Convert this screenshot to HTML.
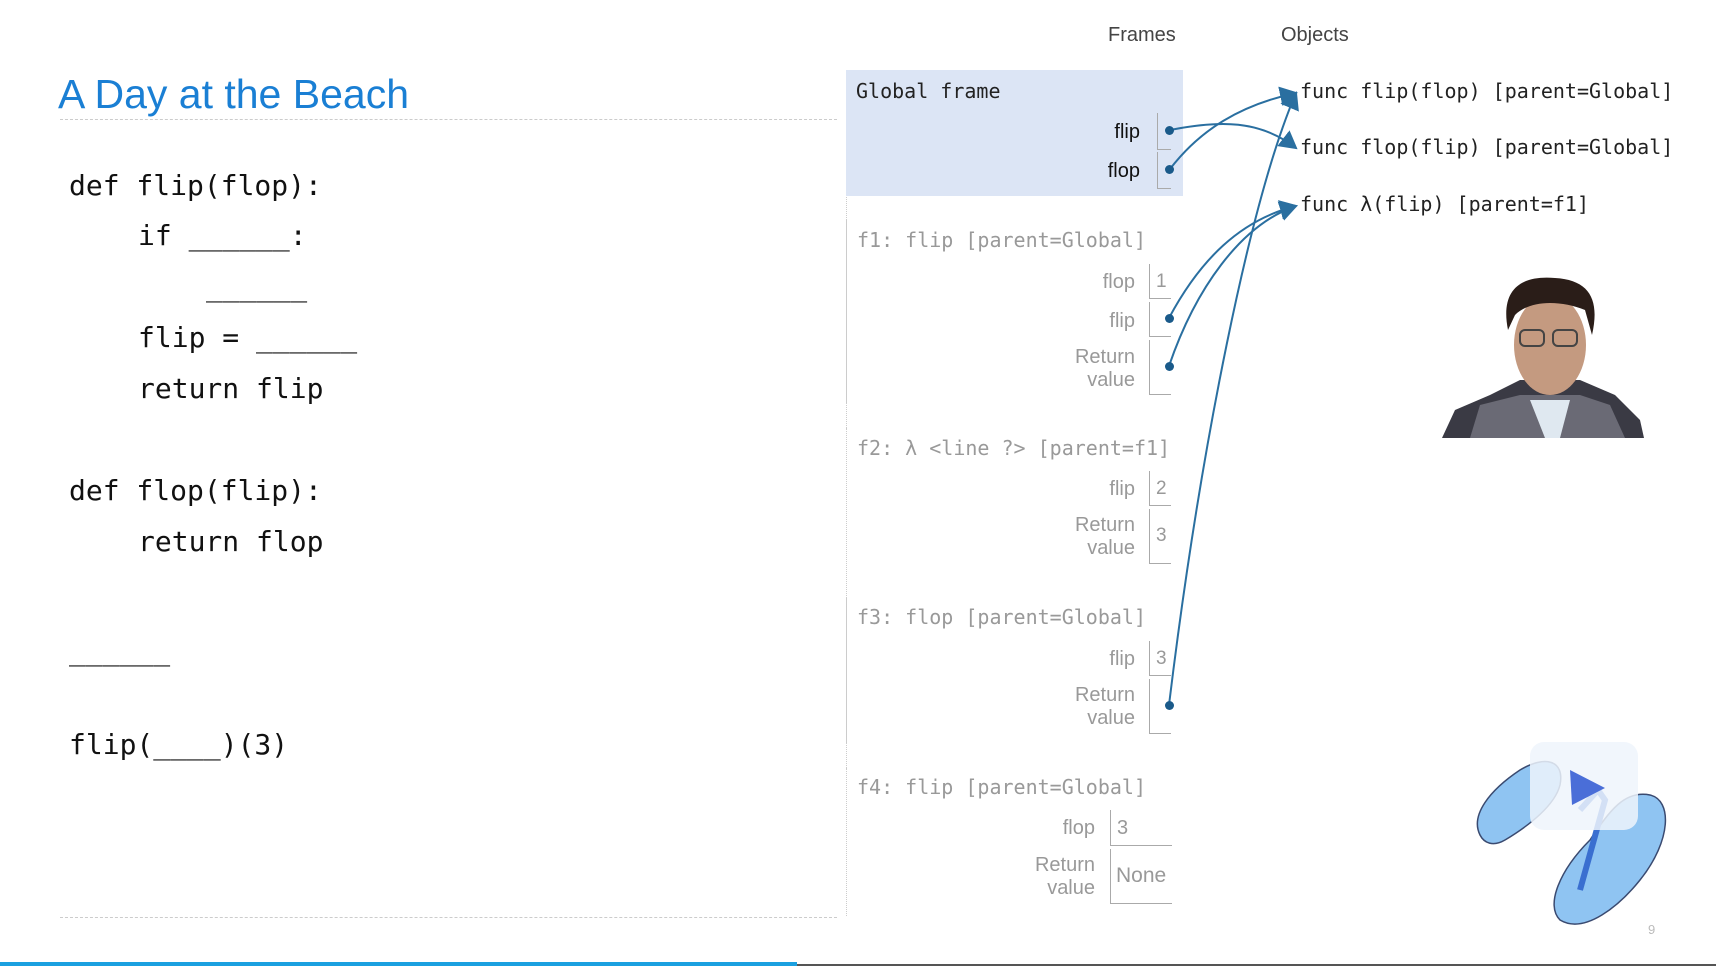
<!DOCTYPE html>
<html><head><meta charset="utf-8"><style>
*{margin:0;padding:0;box-sizing:border-box}
body{width:1716px;height:966px;background:#fff;position:relative;overflow:hidden;font-family:"Liberation Sans",sans-serif}
.a{position:absolute;white-space:pre}
.code{font-family:"DejaVu Sans Mono","Liberation Mono",monospace;font-size:28px;line-height:36px;color:#111}
.mono{font-family:"DejaVu Sans Mono","Liberation Mono",monospace;font-size:20px;line-height:24px}
.lbl{font-size:20px;line-height:24px;text-align:right;color:#999}
.g{color:#999}
.box{position:absolute;border-left:1.5px solid #aaa;border-bottom:1.5px solid #aaa}
.dot{position:absolute;width:9px;height:9px;border-radius:50%;background:#1a5a8a}
</style></head><body>
<div class="a" style="left:58px;top:71px;font-size:41px;color:#1a7fd4;line-height:46px">A Day at the Beach</div>
<div class="a" style="left:60px;top:119px;width:777px;border-top:1px dashed #ccc"></div>
<div class="a" style="left:60px;top:917px;width:777px;border-top:1px dashed #ccc"></div>
<div class="a" style="left:846px;top:70px;height:846px;border-left:1px dotted #ccc"></div>

<div class="a code" style="left:69px;top:168px">def flip(flop):</div>
<div class="a code" style="left:138px;top:218px">if ______:</div>
<div class="a code" style="left:206px;top:269px">______</div>
<div class="a code" style="left:138px;top:320px">flip = ______</div>
<div class="a code" style="left:138px;top:371px">return flip</div>
<div class="a code" style="left:69px;top:473px">def flop(flip):</div>
<div class="a code" style="left:138px;top:524px">return flop</div>
<div class="a code" style="left:69px;top:633px">______</div>
<div class="a code" style="left:69px;top:727px">flip(____)(3)</div>

<div class="a" style="left:1108px;top:24px;font-size:20px;color:#444">Frames</div>
<div class="a" style="left:1281px;top:24px;font-size:20px;color:#444">Objects</div>

<div class="a" style="left:846px;top:70px;width:337px;height:126px;background:#dce5f5"></div>
<div class="a mono" style="left:856px;top:79px;color:#222">Global frame</div>
<div class="a lbl" style="left:1040px;top:120px;width:100px;color:#111">flip</div>
<div class="a lbl" style="left:1040px;top:159px;width:100px;color:#111">flop</div>
<div class="box" style="left:1157px;top:113px;width:14px;height:37px"></div>
<div class="box" style="left:1157px;top:152px;width:14px;height:37px"></div>

<div class="a" style="left:846px;top:219px;height:184px;border-left:1px dotted #ccc"></div>
<div class="a mono g" style="left:857px;top:228px">f1: flip [parent=Global]</div>
<div class="a lbl" style="left:1035px;top:270px;width:100px">flop</div>
<div class="a lbl" style="left:1035px;top:309px;width:100px">flip</div>
<div class="a lbl" style="left:1035px;top:346px;width:100px;line-height:23px">Return<br>value</div>
<div class="box" style="left:1149px;top:264px;width:22px;height:35px"></div>
<div class="box" style="left:1149px;top:302px;width:22px;height:35px"></div>
<div class="box" style="left:1149px;top:340px;width:22px;height:55px"></div>
<div class="a g" style="left:1156px;top:271px;font-size:19px">1</div>

<div class="a" style="left:846px;top:428px;height:146px;border-left:1px dotted #ccc"></div>
<div class="a mono g" style="left:857px;top:436px">f2: λ &lt;line ?&gt; [parent=f1]</div>
<div class="a lbl" style="left:1035px;top:477px;width:100px">flip</div>
<div class="a lbl" style="left:1035px;top:514px;width:100px;line-height:23px">Return<br>value</div>
<div class="box" style="left:1149px;top:471px;width:22px;height:35px"></div>
<div class="box" style="left:1149px;top:509px;width:22px;height:55px"></div>
<div class="a g" style="left:1156px;top:478px;font-size:19px">2</div>
<div class="a g" style="left:1156px;top:525px;font-size:19px">3</div>

<div class="a" style="left:846px;top:597px;height:146px;border-left:1px dotted #ccc"></div>
<div class="a mono g" style="left:857px;top:605px">f3: flop [parent=Global]</div>
<div class="a lbl" style="left:1035px;top:647px;width:100px">flip</div>
<div class="a lbl" style="left:1035px;top:684px;width:100px;line-height:23px">Return<br>value</div>
<div class="box" style="left:1149px;top:641px;width:22px;height:35px"></div>
<div class="box" style="left:1149px;top:679px;width:22px;height:55px"></div>
<div class="a g" style="left:1156px;top:648px;font-size:19px">3</div>

<div class="a" style="left:846px;top:768px;height:146px;border-left:1px dotted #ccc"></div>
<div class="a mono g" style="left:857px;top:775px">f4: flip [parent=Global]</div>
<div class="a lbl" style="left:995px;top:816px;width:100px">flop</div>
<div class="a lbl" style="left:995px;top:854px;width:100px;line-height:23px">Return<br>value</div>
<div class="box" style="left:1110px;top:810px;width:62px;height:36px"></div>
<div class="box" style="left:1110px;top:849px;width:62px;height:55px"></div>
<div class="a g" style="left:1117px;top:817px;font-size:20px">3</div>
<div class="a g" style="left:1116px;top:864px;font-size:21px">None</div>

<div class="a mono" style="left:1300px;top:79px;color:#222">func flip(flop) [parent=Global]</div>
<div class="a mono" style="left:1300px;top:135px;color:#222">func flop(flip) [parent=Global]</div>
<div class="a mono" style="left:1300px;top:192px;color:#222">func λ(flip) [parent=f1]</div>

<svg class="a" style="left:0;top:0" width="1716" height="966">
<defs><marker id="m" markerWidth="10" markerHeight="10" refX="8" refY="5" orient="auto"><path d="M0,0 L9,5 L0,10 Z" fill="#2a6fa0"/></marker></defs>
<g fill="none" stroke="#2a6fa0" stroke-width="2" marker-end="url(#m)">
<path d="M1170,130 C1220,120 1260,120 1296,148"/>
<path d="M1170,169 C1200,130 1240,105 1296,93"/>
<path d="M1169,318 C1200,260 1240,220 1296,206"/>
<path d="M1169,366 C1195,290 1240,225 1296,206"/>
<path d="M1169,705 C1200,450 1250,200 1296,93"/>
</g>
<rect x="0" y="962" width="797" height="4" fill="#1aa0e0"/>
<rect x="797" y="964" width="919" height="2" fill="#555"/>
<g>
<path d="M1442,438 L1455,410 L1490,395 L1520,380 L1580,380 L1615,395 L1640,420 L1644,438 Z" fill="#3a3a44"/>
<path d="M1470,438 L1480,405 L1520,395 L1580,395 L1610,405 L1625,438 Z" fill="#8a8a96" opacity=".6"/>
<path d="M1530,400 L1545,438 L1560,438 L1570,400 Z" fill="#dfe8f0"/>
<ellipse cx="1550" cy="345" rx="36" ry="50" fill="#c49a80"/>
<path d="M1508,330 C1500,290 1520,275 1555,278 C1590,280 1600,300 1592,335 L1585,310 C1560,300 1530,300 1515,315 Z" fill="#2a1d18"/>
<rect x="1520" y="330" width="24" height="16" rx="5" fill="none" stroke="#444" stroke-width="2"/>
<rect x="1553" y="330" width="24" height="16" rx="5" fill="none" stroke="#444" stroke-width="2"/>
</g>
<g stroke="#3a4a70" stroke-width="1.5" fill="#8fc4f2">
<path d="M1480,835 C1470,815 1490,790 1520,770 C1545,755 1565,760 1560,785 C1555,805 1530,825 1505,840 C1493,847 1484,843 1480,835 Z"/>
<path d="M1560,920 C1545,905 1560,870 1590,840 C1610,810 1625,790 1650,795 C1672,800 1672,840 1640,880 C1620,905 1585,935 1560,920 Z"/>
</g>
<path d="M1580,810 L1598,790 L1605,800 L1580,890" stroke="#3a6fd0" stroke-width="6" fill="none"/>
<rect x="1530" y="742" width="108" height="88" rx="14" fill="#eef4fb" opacity=".85"/>
<path d="M1570,770 L1605,788 L1572,805 Z" fill="#4a6ed8"/>
<text x="1648" y="934" font-size="13" fill="#bbb" font-family="Liberation Sans">9</text>
</svg>
<div class="dot" style="left:1165px;top:126px"></div>
<div class="dot" style="left:1165px;top:165px"></div>
<div class="dot" style="left:1165px;top:314px"></div>
<div class="dot" style="left:1165px;top:362px"></div>
<div class="dot" style="left:1165px;top:701px"></div>
</body></html>
